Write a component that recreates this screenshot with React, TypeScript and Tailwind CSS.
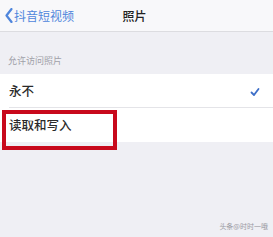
import React from 'react';

const cjk = { fontFamily: '"Noto Sans CJK SC", "Noto Sans", sans-serif' };

const App: React.FC = () => {
  return (
    <div className="w-[273px] h-[237px] bg-[#efeff4] flex flex-col relative overflow-hidden" style={cjk}>
      {/* nav bar */}
      <div className="h-[32px] bg-[#f8f8fa] border-b border-[#dcdce0] flex items-center relative">
        <div className="flex items-center pl-[5px] text-[#4f86dc]">
          <svg width="8" height="15" viewBox="0 0 8 15" className="mr-[1px]">
            <path d="M6.5 1 L1.5 7.5 L6.5 14" fill="none" stroke="#4f86dc" strokeWidth="2.2" strokeLinecap="round" strokeLinejoin="round" />
          </svg>
          <span className="text-[12px] leading-none">抖音短视频</span>
        </div>
        <div className="absolute left-0 right-0 top-0 bottom-0 flex items-center justify-center pointer-events-none">
          <span className="text-[12px] leading-none font-medium text-[#222] ml-[-4px]">照片</span>
        </div>
      </div>

      {/* section header */}
      <div className="h-[42px] flex items-end px-[8px] pb-[7px]">
        <span className="text-[9px] leading-[12px] text-[#a0a0a8]">允许访问照片</span>
      </div>

      {/* rows */}
      <div className="bg-white">
        <div className="h-[34px] flex items-center justify-between px-[9px] relative">
          <span className="text-[12.5px] leading-none font-medium text-[#2a2a2a]">永不</span>
          <svg width="10" height="10" viewBox="0 0 10 10" className="mr-[4px] mt-[2px]">
            <path d="M1.5 5.5 L4 8 L8.5 2" fill="none" stroke="#3e6fc8" strokeWidth="1.8" strokeLinecap="round" strokeLinejoin="round" />
          </svg>
          <div className="absolute left-[9px] right-0 bottom-0 h-px bg-[#e4e4e8]" />
        </div>
        <div className="h-[34px] flex items-center px-[9px] relative">
          <span className="text-[12.5px] leading-none font-medium text-[#2a2a2a]">读取和写入</span>
          <div className="absolute left-[2px] top-[2px] w-[115px] h-[40px] border-[4px] border-[#c8091c]" />
        </div>
      </div>

      <div className="flex-1" />
      <div className="flex justify-end pr-[5px] pb-[7px]">
        <span className="text-[7px] leading-none text-[#9a9aa2]">头条@时时一哦</span>
      </div>
    </div>
  );
};

export default App;
